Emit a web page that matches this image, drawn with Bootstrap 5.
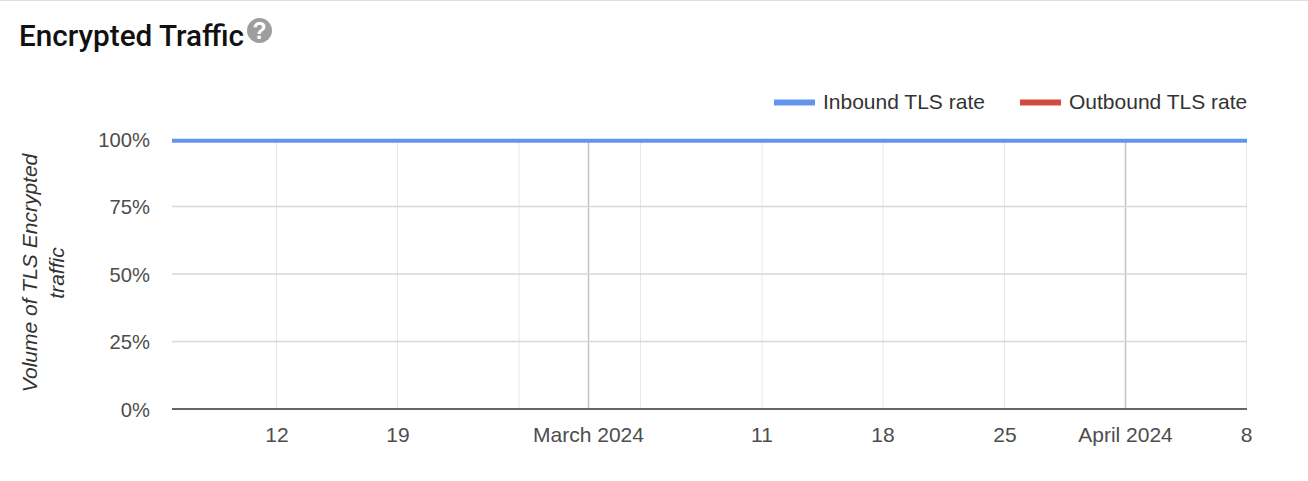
<!DOCTYPE html>
<html lang="en">
<head>
<meta charset="utf-8">
<title>Encrypted Traffic</title>
<link href="https://cdn.jsdelivr.net/npm/bootstrap@5.3.0/dist/css/bootstrap.min.css" rel="stylesheet">
<style>
html,body{height:481px;overflow:hidden;background:#fff}
.page-wrap{border-top:1px solid #ddd;height:481px}
.title-row{height:69px;padding:16px 0 0 19px}
.title-txt{font-family:Roboto,"Liberation Sans",sans-serif;font-weight:500;font-size:29.7px;line-height:38px;color:#111;margin:0}
.help-ic{width:25px;height:25px;margin-top:1px;margin-left:3px;display:block;flex:none}
.help-q{font-family:"Liberation Sans",sans-serif;font-weight:700;font-size:23px;fill:#fff}
.chart-svg{display:block;width:1308px;height:411px}
.chart-svg text{font-family:"Liberation Sans",Arial,sans-serif;font-size:21px;fill:#4d4d4d}
.chart-svg .tick-y{font-size:20.2px}
.chart-svg .legend-t{fill:#333}
.chart-svg .axis-t{font-style:italic;fill:#333}
</style>
</head>
<body>
<div class="page-wrap">
  <div class="title-row d-flex align-items-start">
    <h2 class="title-txt">Encrypted Traffic</h2>
    <svg class="help-ic" viewBox="0 0 25 25" role="img" aria-label="Help">
      <circle cx="12.5" cy="12.5" r="12.5" fill="#9e9e9e"/>
      <text class="help-q" x="12.5" y="20.5" text-anchor="middle">?</text>
    </svg>
  </div>
  <svg class="chart-svg" viewBox="0 70 1308 411" role="img" aria-label="Encrypted traffic chart">
    <g stroke="#e6e6e6" stroke-width="1">
      <path d="M276.5 140V409M397.5 140V409M519 140V409M640.5 140V409M762 140V409M883 140V409M1004.5 140V409M1246.5 140V409"/>
    </g>
    <path d="M588.5 140V409M1125.5 140V409" stroke="#c4c4c4" stroke-width="1.5"/>
    <path d="M172 206.5H1247M172 274H1247M172 341.5H1247" stroke="#d8d8d8" stroke-width="1.5"/>
    <path d="M172 409H1247" stroke="#666" stroke-width="2"/>
    <path d="M172 140.7H1247" stroke="#6495ed" stroke-width="4"/>

    <path d="M774 102.5H815" stroke="#6495ed" stroke-width="6"/>
    <text class="legend-t" x="823" y="109">Inbound TLS rate</text>
    <path d="M1020 102.5H1061" stroke="#d24a3c" stroke-width="6"/>
    <text class="legend-t" x="1069" y="109">Outbound TLS rate</text>

    <g text-anchor="end">
      <text class="tick-y" x="150" y="147">100%</text>
      <text class="tick-y" x="150" y="214">75%</text>
      <text class="tick-y" x="150" y="282">50%</text>
      <text class="tick-y" x="150" y="349">25%</text>
      <text class="tick-y" x="150" y="417">0%</text>
    </g>
    <g text-anchor="middle">
      <text x="277" y="442">12</text>
      <text x="398" y="442">19</text>
      <text x="588.5" y="442">March 2024</text>
      <text x="762" y="442">11</text>
      <text x="883" y="442">18</text>
      <text x="1005" y="442">25</text>
      <text x="1125.5" y="442">April 2024</text>
      <text x="1246.5" y="442">8</text>
    </g>
    <g text-anchor="middle">
      <text class="axis-t" transform="translate(37 273) rotate(-90)">Volume of TLS Encrypted</text>
      <text class="axis-t" transform="translate(64 273) rotate(-90)">traffic</text>
    </g>
  </svg>
</div>
<script src="https://cdn.jsdelivr.net/npm/bootstrap@5.3.0/dist/js/bootstrap.bundle.min.js"></script>
</body>
</html>
